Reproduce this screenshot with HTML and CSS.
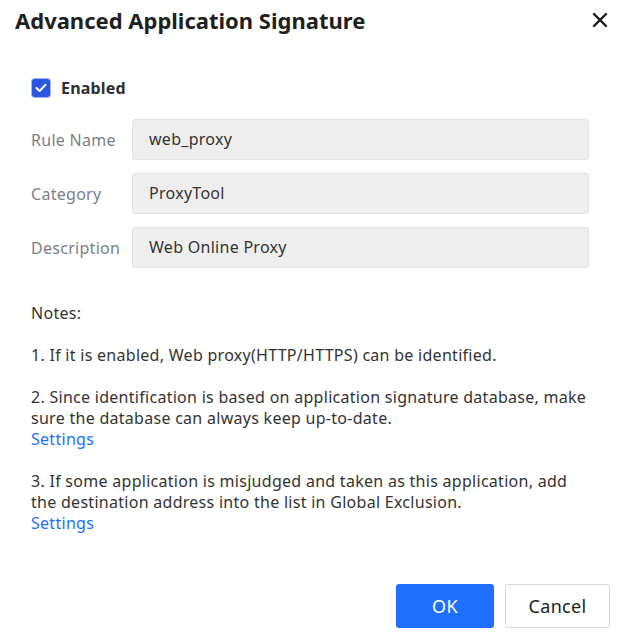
FILE: index.html
```html
<!DOCTYPE html>
<html>
<head>
<meta charset="utf-8">
<link rel="stylesheet" href="styles.css">
</head>
<body>
<div class="dialog">
  <div class="header">
    <h1 class="title">Advanced Application Signature</h1>
    <button class="close" aria-label="Close">
      <svg width="16" height="16" viewBox="0 0 16 16"><path d="M2 2 L14 14 M14 2 L2 14" stroke="#1a1a1a" stroke-width="2.4" stroke-linecap="round"/></svg>
    </button>
  </div>
  <div class="body">
    <label class="check-row">
      <span class="checkbox">
        <svg width="12" height="10" viewBox="0 0 12 10"><path d="M1.5 5 L4.6 8 L10.5 1.8" fill="none" stroke="#fff" stroke-width="2" stroke-linecap="round" stroke-linejoin="round"/></svg>
      </span>
      <span class="check-label">Enabled</span>
    </label>
    <div class="form">
      <div class="row"><span class="label">Rule Name</span><div class="field">web_proxy</div></div>
      <div class="row"><span class="label">Category</span><div class="field">ProxyTool</div></div>
      <div class="row"><span class="label">Description</span><div class="field">Web Online Proxy</div></div>
    </div>
    <div class="notes">
      <p>Notes:</p>
      <p>1. If it is enabled, Web proxy(HTTP/HTTPS) can be identified.</p>
      <p>2. Since identification is based on application signature database, make sure the database can always keep up-to-date.<br><a class="link" href="#">Settings</a></p>
      <p>3. If some application is misjudged and taken as this application, add the destination address into the list in Global Exclusion.<br><a class="link" href="#">Settings</a></p>
    </div>
  </div>
  <div class="footer">
    <button class="btn btn-primary">OK</button>
    <button class="btn btn-default">Cancel</button>
  </div>
</div>
</body>
</html>
```
FILE: styles.css
```css
html, body {
  margin: 0;
  padding: 0;
  background: #fff;
}
body {
  font-family: "Noto Sans", sans-serif;
  color: #333;
  width: 629px;
  height: 642px;
  overflow: hidden;
}
.dialog {
  display: flex;
  flex-direction: column;
  height: 642px;
}
.header {
  display: flex;
  align-items: center;
  justify-content: space-between;
  height: 40px;
  padding: 0 21px 0 15px;
}
.title {
  margin: 0;
  font-size: 22px;
  font-weight: 700;
  color: #1f1f1f;
}
.close {
  border: 0;
  background: none;
  padding: 0;
  display: flex;
  cursor: pointer;
}
.body {
  padding: 37px 40px 0 31px;
  letter-spacing: 0.28px;
}
.check-row {
  display: flex;
  align-items: center;
  gap: 11px;
  height: 22px;
  margin-left: 1px;
}
.checkbox {
  width: 18px;
  height: 18px;
  border-radius: 3px;
  background: #2a56e0;
  box-shadow: 0 0 0 1px #9fb4f0;
  display: flex;
  align-items: center;
  justify-content: center;
}
.check-label {
  font-weight: 700;
  font-size: 16px;
  color: #2b2f36;
  letter-spacing: 0.2px;
}
.form {
  display: flex;
  flex-direction: column;
  gap: 13px;
  margin-top: 20px;
}
.row {
  display: flex;
  align-items: center;
}
.label {
  width: 101px;
  font-size: 16px;
  color: #7b7f86;
}
.field {
  flex: 1;
  height: 39px;
  line-height: 39px;
  border: 1px solid #e3e3e3;
  border-radius: 3px;
  background: #eeeeee;
  padding-left: 16px;
  font-size: 16px;
  color: #333;
}
.notes {
  margin-top: 35px;
  font-size: 16px;
  line-height: 21px;
  color: #333;
}
.notes p {
  margin: 0 0 21px;
}
.link {
  color: #1f6fff;
  text-decoration: none;
}
.footer {
  margin-top: auto;
  display: flex;
  justify-content: flex-end;
  gap: 11px;
  padding: 0 19px 14px 0;
}
.btn {
  height: 44px;
  border-radius: 3px;
  font-family: "Noto Sans", sans-serif;
  font-size: 18px;
  letter-spacing: 0.3px;
  cursor: pointer;
}
.btn-primary {
  width: 98px;
  background: #1f6fff;
  border: 0;
  color: #fff;
}
.btn-default {
  width: 105px;
  background: #fff;
  border: 1px solid #d5d8dd;
  color: #222;
}
```
